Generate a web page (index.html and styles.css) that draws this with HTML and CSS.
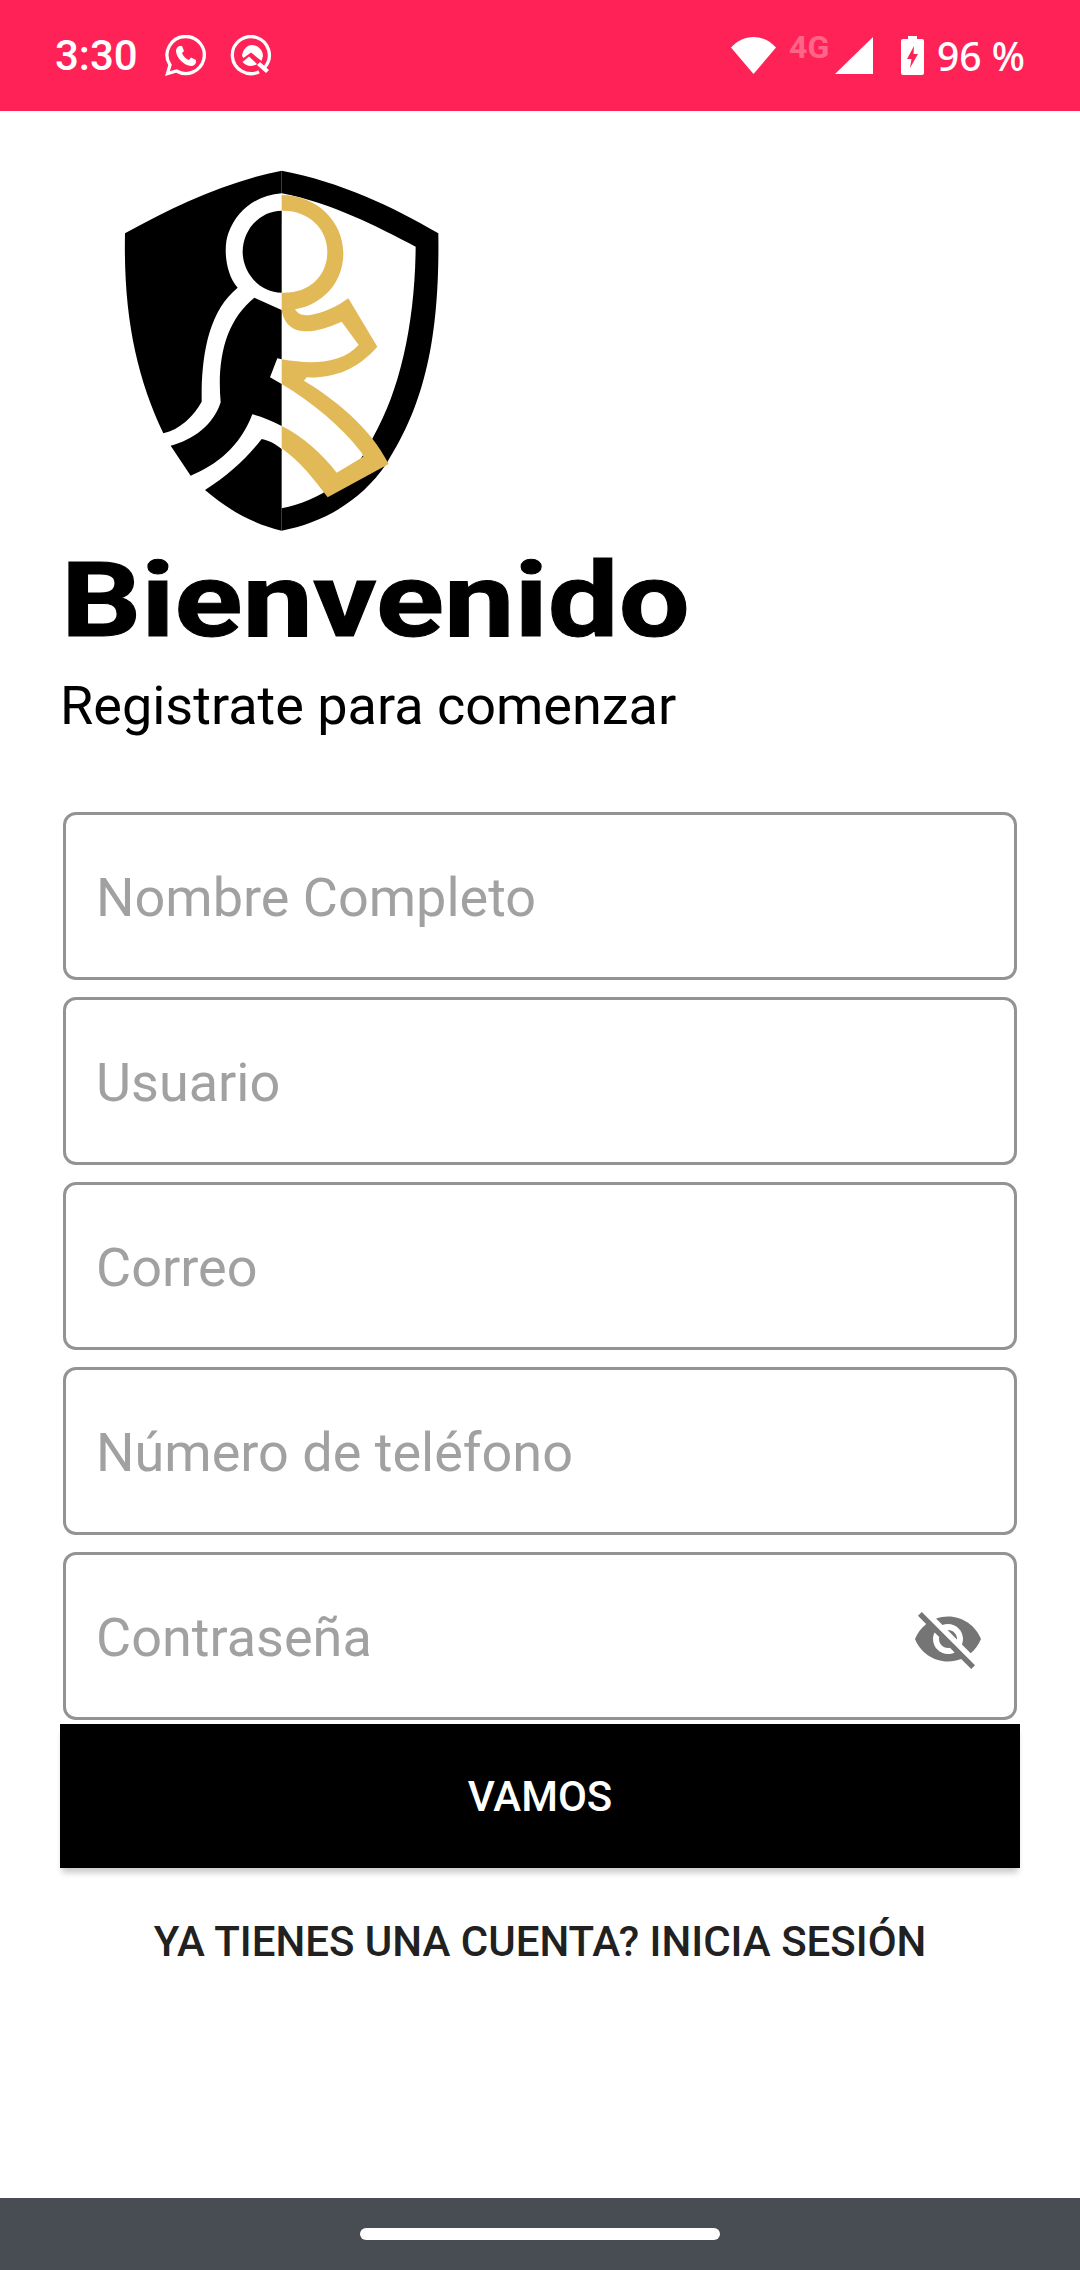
FILE: index.html
```html
<!DOCTYPE html>
<html lang="es">
<head>
	<meta charset="UTF-8">
	<title>Bienvenido</title>
	<link rel="stylesheet" href="styles.css">
</head>
<body>
	<div class="status">
		<span class="time">3:30</span>
		<svg class="ico-app" width="42" height="42" viewBox="0 0 42 42">
			<path class="ring" d="M21 1.5A18.5 18.5 0 1 1 11.5 36L2.5 38.5 5 30A18.5 18.5 0 0 1 21 1.5Z"/>
			<path class="solid" d="M15 11C13 11 11 13.5 11 16 11 22 19 31 26 31 29 31 31 29 31 26.5V25L26 22.5 24 25C21 24 18 21 17 18L19 16 17 11Z"/>
		</svg>
		<svg class="ico-app" width="42" height="42" viewBox="0 0 42 42">
			<path class="ring" d="M29 36.7A18.5 18.5 0 1 1 35 32"/>
			<path class="solid" d="M27 30L36 38 39 35 30 27Z"/>
			<path class="solid" d="M12 21C13 14 17 10 22 10 28 10 33 15 33 21L31.5 26 21 17.5 13.5 23Z"/>
			<path class="solid" d="M12.5 27L19 21.5 27 29Q24 31 21 31 16 31 12.5 27Z"/>
		</svg>
		<div class="status-right">
			<svg width="45" height="37" viewBox="0 0 45 37"><path class="solid" d="M0 10.5C6 4 14 0 22.5 0S39 4 45 10.5L22.5 37Z"/></svg>
			<span class="net">4G</span>
			<svg class="signal" width="38" height="37" viewBox="0 0 38 37"><path class="solid" d="M38 0V37H0Z"/></svg>
			<svg class="battery" width="23" height="39" viewBox="0 0 23 39">
				<path class="solid" d="M7 0H16V3H21Q23 3 23 5V37Q23 39 21 39H2Q0 39 0 37V5Q0 3 2 3H7Z"/>
				<path class="bolt" d="M13 10L6 23H10.5L9 32 17 18H12.5Z"/>
			</svg>
			<span class="pct">96 %</span>
		</div>
	</div>

	<div class="main">
		<svg class="logo" width="360" height="400" viewBox="0 0 1080 1200">
			<path d="M545 62C380 95 220 170 75 250 70 500 110 680 190 850 240 838 280 800 305 755L305 720C308 600 330 480 413 413 375 370 370 290 385 250 410 180 470 135 545 130Z"/>
			<path d="M545 182C480 182 428 240 428 305 428 370 480 428 545 428Z"/>
			<path d="M463 443L545 480V628L532 625 510 682 545 702V828C515 812 485 800 457 793 420 890 350 945 272 977L212 887C280 870 340 825 362 757 350 620 380 510 463 443Z"/>
			<path d="M485 867C510 872 530 885 545 897V1142C470 1125 390 1085 315 1020 385 975 440 925 485 867Z"/>
			<path d="M545 62C720 95 880 170 1015 250 1020 600 960 780 860 940 780 1060 660 1120 545 1142V1075C660 1050 760 990 820 860 900 720 945 520 947 290 830 230 700 160 545 130Z"/>
			<path class="gold" d="M545 135C650 135 730 215 730 310 730 400 665 465 585 478 595 495 610 497 630 495 670 490 710 470 745 445L832 590C770 660 700 685 620 682L612 692C700 745 810 830 866 942L683 1042C640 985 600 935 545 895V828C610 860 670 915 710 968L790 920 785 908C720 825 640 760 545 702V628C640 645 725 640 776 585L725 515C680 535 640 547 605 543 570 540 548 510 545 480V428C625 432 682 380 682 305 682 235 625 180 545 182Z"/>
		</svg>
		<h1 class="title">Bienvenido</h1>
		<p class="subtitle">Registrate para comenzar</p>

		<div class="form">
			<div class="field">Nombre Completo</div>
			<div class="field">Usuario</div>
			<div class="field">Correo</div>
			<div class="field">Número de teléfono</div>
			<div class="field">Contraseña
				<svg class="eye" width="72" height="72" viewBox="0 0 24 24"><path d="M12 7c2.76 0 5 2.24 5 5 0 .65-.13 1.26-.36 1.83l2.92 2.92c1.51-1.26 2.7-2.89 3.43-4.75-1.73-4.39-6-7.5-11-7.5-1.4 0-2.74.25-3.98.7l2.16 2.16C10.74 7.13 11.35 7 12 7zM2 4.27l2.28 2.28.46.46C3.08 8.3 1.78 10.02 1 12c1.73 4.39 6 7.5 11 7.5 1.55 0 3.03-.3 4.38-.84l.42.42L19.73 22 21 20.73 3.27 3 2 4.27zM7.53 9.8l1.55 1.55c-.05.21-.08.43-.08.65 0 1.66 1.34 3 3 3 .22 0 .44-.03.65-.08l1.55 1.55c-.67.33-1.41.53-2.2.53-2.76 0-5-2.24-5-5 0-.79.2-1.53.53-2.2zm4.31-.78l3.15 3.15.02-.16c0-1.66-1.34-3-3-3l-.17.01z"/></svg>
			</div>
		</div>
		<div class="btn">VAMOS</div>
		<div class="login">YA TIENES UNA CUENTA? INICIA SESIÓN</div>
	</div>

	<div class="navbar"><span class="handle"></span></div>
</body>
</html>
```

FILE: styles.css
```css
* {
	box-sizing: border-box;
}
html, body {
	margin: 0;
	height: 100%;
}
body {
	display: flex;
	flex-direction: column;
	background: #fff;
	font-family: Roboto, "Liberation Sans", sans-serif;
	overflow: hidden;
}

/* status bar */
.status {
	display: flex;
	align-items: center;
	height: 111px;
	padding: 0 55px 0 55px;
	background: #ff2256;
	color: #fff;
}
.time {
	font-size: 42px;
	font-weight: 500;
	margin-right: 27px;
	line-height: 46px;
	margin-top: 1px;
}
.ico-app {
	margin-right: 23px;
}
.ring {
	fill: none;
	stroke: #fff;
	stroke-width: 3.3;
}
.solid {
	fill: #fff;
}
.bolt {
	fill: #ff2256;
}
.status-right {
	display: flex;
	align-items: center;
	margin-left: auto;
}
.net {
	align-self: flex-start;
	width: 40px;
	margin: 3px 6px 0 13px;
	font-size: 32px;
	font-weight: 700;
	line-height: 24px;
	opacity: .3;
}
.battery {
	margin-left: 28px;
}
.pct {
	margin-left: 13px;
	font-family: "Noto Sans", sans-serif;
	font-size: 39px;
	font-weight: 500;
	line-height: 46px;
	margin-top: 1px;
}

/* content */
.main {
	display: flex;
	flex-direction: column;
	flex: 1;
	padding: 0 60px;
}
.logo {
	display: block;
	margin: 39px 0 0 40px;
}
.logo path {
	fill: #000;
}
.logo .gold {
	fill: #e2b957;
}
.title {
	align-self: flex-start;
	margin: -4px 0 0 1px;
	font-size: 104px;
	font-weight: 700;
	line-height: 110px;
	color: #000;
	-webkit-text-stroke: 1px #000;
	transform: scaleX(1.21);
	transform-origin: left center;
}
.subtitle {
	margin: 19px 0 0 0;
	font-size: 54px;
	line-height: 62px;
	color: #000;
}
.form {
	display: flex;
	flex-direction: column;
	gap: 17px;
	margin: 75px 3px 0;
}
.field {
	position: relative;
	display: flex;
	align-items: center;
	height: 168px;
	padding: 3px 0 0 30px;
	border: 3px solid #939393;
	border-radius: 13px;
	font-size: 54px;
	color: #a1a1a1;
}
.eye {
	position: absolute;
	right: 30px;
	top: 48px;
	fill: #757575;
}
.btn {
	display: flex;
	align-items: center;
	justify-content: center;
	height: 144px;
	margin-top: 4px;
	background: #000;
	color: #fff;
	font-size: 42px;
	font-weight: 500;
	box-shadow: 0 7px 6px -2px rgba(0,0,0,.2);
}
.login {
	margin-top: 51px;
	text-align: center;
	font-size: 42px;
	font-weight: 500;
	line-height: 46px;
	color: #212121;
}

.navbar {
	display: flex;
	align-items: center;
	justify-content: center;
	height: 72px;
	background: #474d52;
}
.handle {
	width: 360px;
	height: 12px;
	border-radius: 6px;
	background: #fff;
}
```
